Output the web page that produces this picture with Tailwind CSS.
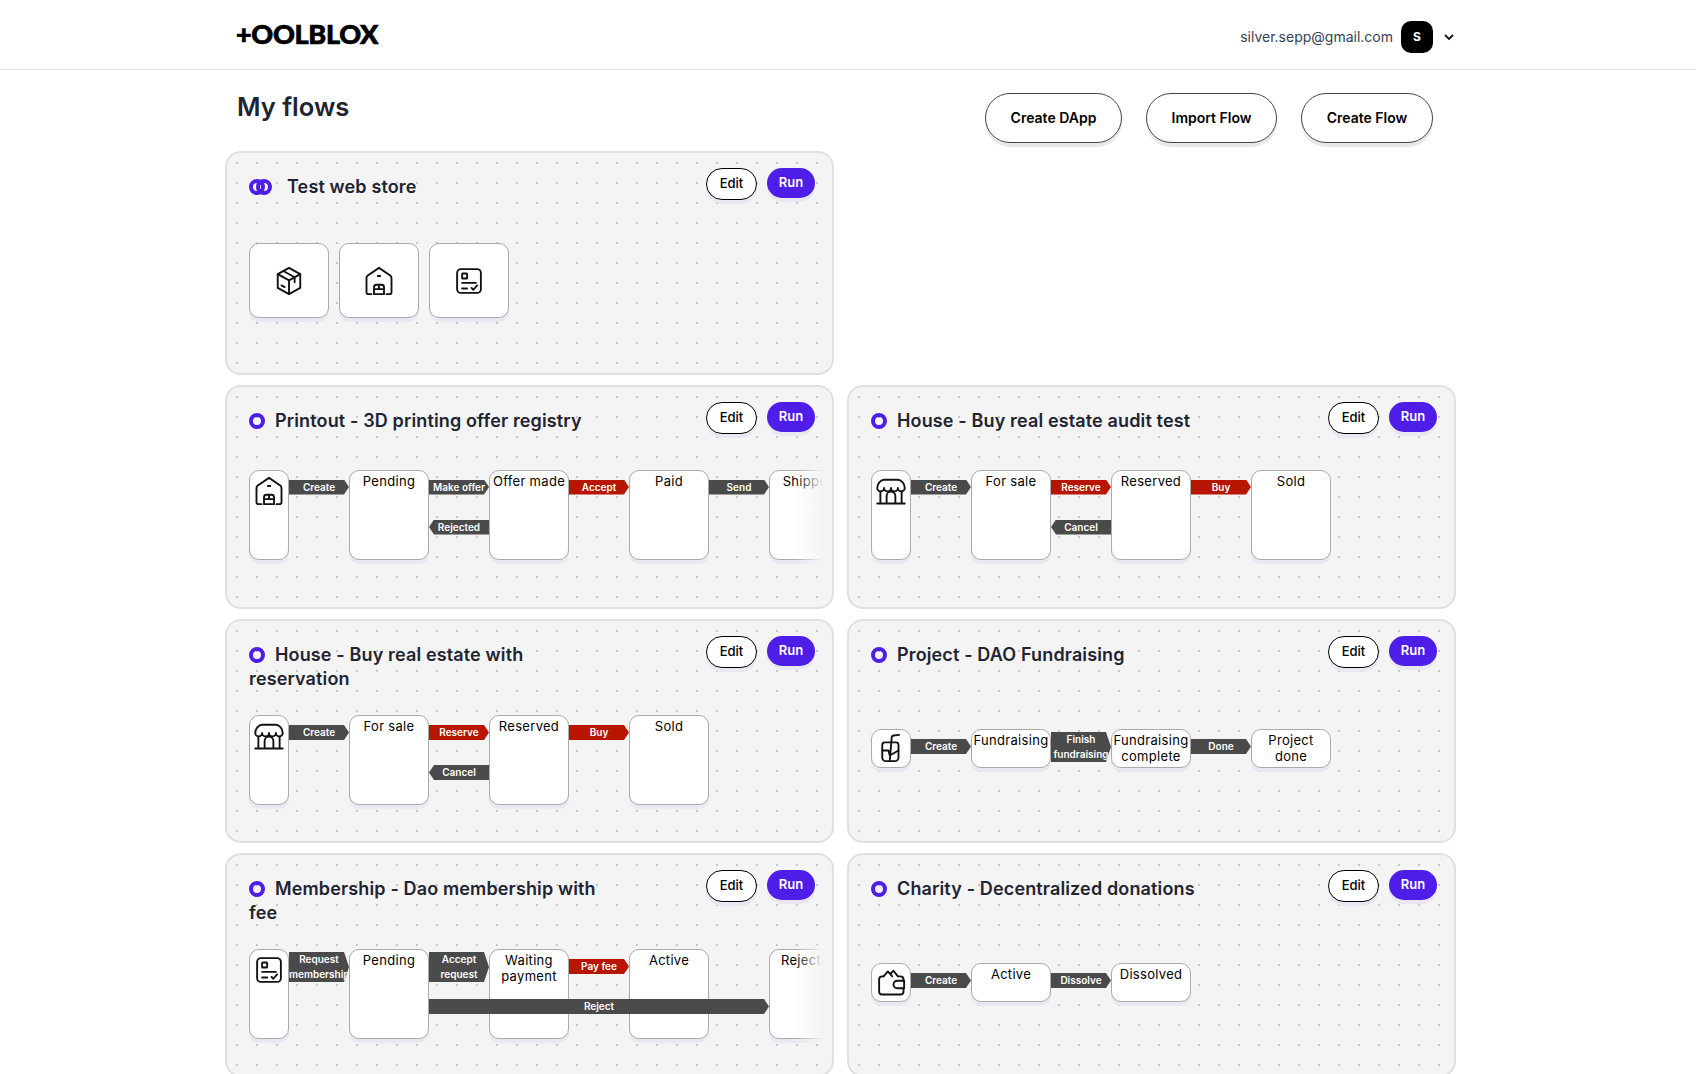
<!DOCTYPE html>
<html lang="en">
<head>
    <meta charset="UTF-8">
    <meta name="viewport" content="width=device-width, initial-scale=1.0">
    <script src="https://cdn.jsdelivr.net/npm/@tailwindcss/browser@4"></script>
    <title>My flows</title>
</head>
<body class="bg-white font-['Inter',sans-serif] text-[#1f2430]">
<div class="h-[1074px] overflow-hidden">
    <!-- header -->
    <div class="h-[70px] border-b border-[#e0e0e0] pl-[225px]">
        <div class="w-[1231px] h-full flex items-center justify-between pl-[11px]">
            <div class="font-['Lato',sans-serif] font-black text-[27px] leading-none tracking-[-0.3px] text-black mt-[-3px] [-webkit-text-stroke:0.7px_black]">+OOLBLOX</div>
            <div class="flex items-center mt-[4px]">
                <span class="text-sm text-[#374151]">silver.sepp@gmail.com</span>
                <span class="ml-2 w-8 h-8 rounded-[10px] bg-black text-white text-xs font-bold flex items-center justify-center">S</span>
                <svg class="ml-[10px] mr-[1px]" width="12" height="12" viewBox="0 0 12 12" fill="none" stroke="#111" stroke-width="1.8"><path d="M2 4l4 4 4-4"/></svg>
            </div>
        </div>
    </div>

    <div class="pl-[225px]">
        <div class="w-[1231px]">
            <!-- title row -->
            <div class="h-[81px] flex justify-between pl-3 pr-[23px]">
                <h1 class="mt-[21px] text-[25.5px] leading-8 font-semibold">My flows</h1>
                <div class="flex gap-6 mt-[23px]">
                    <button class="h-[50px] w-[137px] rounded-full border border-[#444] bg-white text-sm font-semibold text-black shadow-[0_4px_0_#e8e8e8]">Create DApp</button>
                    <button class="h-[50px] w-[131px] rounded-full border border-[#444] bg-white text-sm font-semibold text-black shadow-[0_4px_0_#e8e8e8]">Import Flow</button>
                    <button class="h-[50px] w-[132px] rounded-full border border-[#444] bg-white text-sm font-semibold text-black shadow-[0_4px_0_#e8e8e8]">Create Flow</button>
                </div>
            </div>
            <!-- flow cards -->
            <div class="grid grid-cols-2 gap-x-[13px] gap-y-[10px] auto-rows-[224px]" id="flows"></div>
        </div>
    </div>
</div>

<script>
    const iconBox = '<path d="M12 1.500l9 5v11l-9 5-9-5v-11z"/><path d="M3 6.500l9 5 9-5M12 11.500v11M7.500 4l9 5v4M6 15.500l2.500 1.400"/>';
    const iconWarehouse = '<path d="M6 22.500H3.500A1.500 1.500 0 0 1 2 21V9.500c0-.8.4-1.400 1-1.900L12 1.500l9 6.100c.6.500 1 1.100 1 1.900V21a1.500 1.500 0 0 1-1.500 1.500H18"/><path d="M11 8h2"/><path d="M8 22.500V17a2 2 0 0 1 2-2h4a2 2 0 0 1 2 2v5.500zM8 18.500h8M12 15v3.500"/>';
    const iconForm = '<rect x="2.500" y="2.500" width="19" height="19" rx="3"/><rect x="6.500" y="6" width="4" height="4" rx="0.500"/><path d="M6.500 13.500h11M6.500 18h4M14 17.500l1.500 1.500 3-3.500"/>';
    const iconStore = '<path d="M1 9.500C1 6 4 3 6.500 3h11C20 3 23 6 23 9.500a2.750 2.750 0 0 1-5.500 0 2.750 2.750 0 0 1-5.500 0 2.750 2.750 0 0 1-5.500 0 2.750 2.750 0 0 1-5.500 0z"/><path d="M3.500 12.500V22M20.500 12.500V22M1 22h22M8.500 22v-6a3.500 3.500 0 0 1 7 0v6"/>';
    const iconCup = '<path d="M5 9.500a2 2 0 0 1 2-2h9a2 2 0 0 1 2 2v10a3 3 0 0 1-3 3H8a3 3 0 0 1-3-3z"/><path d="M5 14h5l1 4 7-4M11 22.500L12.500 4a2 2 0 0 1 1.500-2l4.500-.5"/>';
    const iconWallet = '<path d="M6 7.500H5A2.500 2.500 0 0 0 2.500 10v9.500A2.500 2.500 0 0 0 5 22h14.500a2.500 2.500 0 0 0 2.500-2.500V17M22 11v-1a2.500 2.500 0 0 0-2.500-2.500H18"/><path d="M6 7.500l3.500-4 3.500 4M12 5l2-2 3.500 4.500"/><path d="M22.500 11H17a3 3 0 0 0 0 6h5.500z"/>';

    function svgIcon(paths, size) {
        return `<svg width="${size}" height="${size}" viewBox="0 0 24 24" fill="none" stroke="#111" stroke-width="1.500" stroke-linecap="round" stroke-linejoin="round">${paths}</svg>`;
    }

    // forward / backward arrows between two states
    function arrow(a) {
        if (!a) return '';
        const color = a.red ? 'bg-[#b81500]' : 'bg-[#4a4a4a]';
        const shape = a.back
            ? '[clip-path:polygon(5px_0,100%_0,100%_100%,5px_100%,0_50%)]'
            : '[clip-path:polygon(0_0,calc(100%-5px)_0,100%_50%,calc(100%-5px)_100%,0_100%)]';
        const lines = a.text.split('|').map(t => `<span class="block">${t}</span>`).join('');
        return `<div class="${color} ${shape} w-[60px] text-white text-[10px] leading-[15px] font-semibold text-center whitespace-nowrap overflow-hidden">${lines}</div>`;
    }

    function connector(c) {
        if (!c.fwd) return '<div class="w-[60px] shrink-0"></div>';
        const two = c.fwd.text.includes('|');
        return `<div class="w-[60px] shrink-0 flex flex-col ${two ? 'pt-[3px] gap-[17px]' : 'pt-[10px] gap-[25px]'}">${arrow(c.fwd)}${arrow(c.back)}</div>`;
    }

    function stateNode(text, tall) {
        const lines = text.split('|').map(t => `<span class="block">${t}</span>`).join('');
        return `<div class="w-[80px] shrink-0 ${tall ? 'h-[90px]' : 'h-[39px]'} rounded-[10px] border border-[#aaaaaa] bg-white shadow-[0_4px_0_#e9e7f2] pt-[2px] text-[13px] leading-4 tracking-[0.3px] text-black text-center whitespace-nowrap">${lines}</div>`;
    }

    function diagram(f) {
        const tall = f.tall;
        let html = `<div class="w-[40px] shrink-0 ${tall ? 'h-[90px] pt-[5px]' : 'h-[39px] pt-[3px]'} rounded-[10px] border border-[#aaaaaa] bg-white shadow-[0_4px_0_#e9e7f2] flex justify-center">${svgIcon(f.icon, 30)}</div>`;
        f.steps.forEach(s => {
            html += connector(s) + stateNode(s.to, tall);
        });
        const over = f.over ? `<div class="absolute left-[180px] top-[54px] w-[340px] h-[15px] bg-[#4a4a4a] [clip-path:polygon(0_0,calc(100%-5px)_0,100%_50%,calc(100%-5px)_100%,0_100%)] text-white text-[10px] leading-[15px] font-semibold text-center">${f.over}</div>` : '';
        const fade = f.steps.length > 3 ? '<div class="absolute right-0 top-0 bottom-0 w-[28px] bg-gradient-to-r from-transparent to-[#f4f4f5]"></div>' : '';
        return `<div class="relative w-[574px] shrink-0 overflow-hidden py-1 flex">${html}${over}${fade}</div>`;
    }

    function tiles(list) {
        return '<div class="flex gap-[10px]">' + list.map(i =>
            `<div class="w-[80px] h-[75px] rounded-[10px] border border-[#aaaaaa] bg-white shadow-[0_4px_0_#e9e7f2] flex items-center justify-center">${svgIcon(i, 30)}</div>`
        ).join('') + '</div>';
    }

    const ring = '<span class="inline-block align-[-2px] w-4 h-4 rounded-full border-4 border-[#4f1de8] mr-[10px]"></span>';
    const doubleRing = '<svg class="inline-block align-[-2px] mr-[15px]" width="23" height="16" viewBox="0 0 23 16" fill="none" stroke="#4f1de8" stroke-width="4"><circle cx="8" cy="8" r="6"/><circle cx="15" cy="8" r="6"/></svg>';

    function card(f) {
        return `<div class="${f.first ? 'col-start-1' : ''} h-[224px] rounded-2xl border-2 border-[#e0e0e0] bg-[#f4f4f5] bg-[radial-gradient(#c6c6c6_1px,transparent_1px)] bg-[size:20px_20px] pt-[22px] pb-[12px] pl-[22px] pr-[17px] flex flex-col">
            <div class="flex justify-between items-start h-auto">
                <h2 class="w-[352px] text-lg leading-6 tracking-[0.14px] font-semibold">${f.logo ? doubleRing : ring}${f.title}</h2>
                <div class="flex items-start gap-[10px] mt-[-7px]">
                    <button class="w-[51px] h-[32px] rounded-full border border-black bg-white text-[13px] font-medium text-black shadow-[0_4px_0_#e9e7f2]">Edit</button>
                    <button class="w-[48px] h-[30px] rounded-full bg-[#4f1de8] text-[13px] font-semibold text-white shadow-[0_4px_0_#e9e7f2]">Run</button>
                </div>
            </div>
            <div class="flex-1 flex items-center">${f.tiles ? tiles(f.tiles) : diagram(f)}</div>
        </div>`;
    }

    const flows = [
        { title: 'Test web store', logo: true, tiles: [iconBox, iconWarehouse, iconForm] },
        { title: 'Printout - 3D printing offer registry', first: true, tall: true, icon: iconWarehouse, steps: [
            { fwd: { text: 'Create' }, to: 'Pending' },
            { fwd: { text: 'Make offer' }, back: { text: 'Rejected', back: true }, to: 'Offer made' },
            { fwd: { text: 'Accept', red: true }, to: 'Paid' },
            { fwd: { text: 'Send' }, to: 'Shipped' }
        ] },
        { title: 'House - Buy real estate audit test', tall: true, icon: iconStore, steps: [
            { fwd: { text: 'Create' }, to: 'For sale' },
            { fwd: { text: 'Reserve', red: true }, back: { text: 'Cancel', back: true }, to: 'Reserved' },
            { fwd: { text: 'Buy', red: true }, to: 'Sold' }
        ] },
        { title: 'House - Buy real estate with reservation', tall: true, icon: iconStore, steps: [
            { fwd: { text: 'Create' }, to: 'For sale' },
            { fwd: { text: 'Reserve', red: true }, back: { text: 'Cancel', back: true }, to: 'Reserved' },
            { fwd: { text: 'Buy', red: true }, to: 'Sold' }
        ] },
        { title: 'Project - DAO Fundraising', icon: iconCup, steps: [
            { fwd: { text: 'Create' }, to: 'Fundraising' },
            { fwd: { text: 'Finish|fundraising' }, to: 'Fundraising|complete' },
            { fwd: { text: 'Done' }, to: 'Project|done' }
        ] },
        { title: 'Membership - Dao membership with fee', tall: true, icon: iconForm, over: 'Reject', steps: [
            { fwd: { text: 'Request|membership' }, to: 'Pending' },
            { fwd: { text: 'Accept|request' }, to: 'Waiting|payment' },
            { fwd: { text: 'Pay fee', red: true }, to: 'Active' },
            { fwd: null, to: 'Rejected' }
        ] },
        { title: 'Charity - Decentralized donations', icon: iconWallet, steps: [
            { fwd: { text: 'Create' }, to: 'Active' },
            { fwd: { text: 'Dissolve' }, to: 'Dissolved' }
        ] }
    ];

    document.getElementById('flows').innerHTML = flows.map(card).join('');
</script>
</body>
</html>
